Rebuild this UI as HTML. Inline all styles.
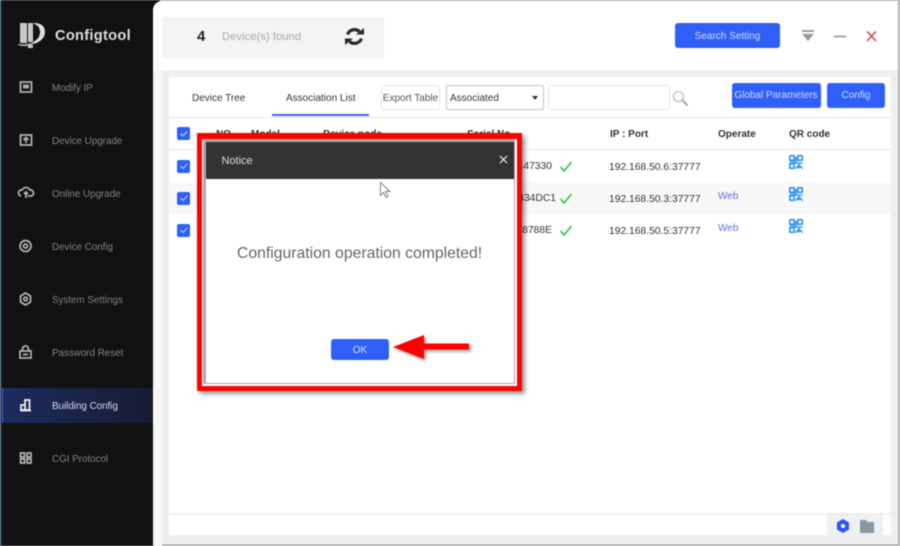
<!DOCTYPE html>
<html><head><meta charset="utf-8">
<style>
html,body{margin:0;padding:0;background:#fff}
#p{position:relative;width:900px;height:546px;overflow:hidden;background:#fff;font-family:"Liberation Sans",sans-serif;filter:blur(.45px)}
#p div,#p span,#p svg{position:absolute}
.t{white-space:nowrap;line-height:14px;font-size:10px}
.s{color:#828282;left:52px;font-size:9.8px}
.h{font-weight:bold;color:#333;top:128px}
.r{color:#333;left:609px;font-size:10.3px}
.b{background:#2f5ff8;color:#cfdcff;text-align:center;border-radius:3px;font-size:10px}
.c{left:177px;width:13px;height:13px;background:#2f5ff8;border-radius:2px}
.web{color:#5a74dc;left:718px}
</style></head><body>
<div id="p">
<div style="left:0;top:0;width:900px;height:1px;background:#a8a8a8"></div>
<div style="left:0;top:0;width:160px;height:546px;background:#111"></div>
<div style="left:0;top:0;width:2px;height:546px;background:#22384f"></div>
<div style="left:153px;top:1px;width:745px;height:545px;background:#fff;border-radius:9px 0 0 0"></div>
<div style="left:153px;top:70px;width:9px;height:476px;background:#f7f7f7"></div>
<div style="left:162px;top:70px;width:736px;height:473px;background:#efefef"></div>
<div style="left:169px;top:77px;width:722px;height:436px;background:#fff"></div>
<div style="left:169px;top:515px;width:722px;height:20px;background:#fff"></div>
<div style="left:827px;top:515px;width:56px;height:20px;background:#eef0f4"></div>
<div style="left:898px;top:0;width:2px;height:546px;background:#b0b0b0"></div>
<div style="left:162px;top:544px;width:738px;height:2px;background:#b0b0b0"></div>

<!-- logo -->
<svg style="left:18px;top:22px" width="28" height="27" viewBox="0 0 28 27"><path d="M2 1h7v20H2zM10 1h5v19h-5z" fill="#c8c8c8"/><path d="M16 1c8 0 11 4 11 9 0 6-5 10-11 12l-1-2c4-2 7-5 7-10 0-4-2-7-6-8z" fill="#ddd"/><path d="M0 22c6 1 11 0 16-2l1 1c-5 3-11 4-17 2z" fill="#bbb"/><path d="M10 23h5v3h-5z" fill="#ccc"/></svg>
<div class="t" style="left:55px;top:27px;font-size:14.6px;line-height:18px;color:#ddd;font-weight:bold;letter-spacing:.3px">Configtool</div>

<!-- sidebar -->
<div style="left:2px;top:388px;width:151px;height:35px;background:linear-gradient(90deg,#1c2c60,#171c32)"></div>
<div style="left:2px;top:388px;width:1px;height:35px;background:#4d55dd"></div>
<div class="t s" style="top:82px">Modify IP</div>
<div class="t s" style="top:135px">Device Upgrade</div>
<div class="t s" style="top:188px">Online Upgrade</div>
<div class="t s" style="top:241px">Device Config</div>
<div class="t s" style="top:294px">System Settings</div>
<div class="t s" style="top:347px">Password Reset</div>
<div class="t" style="left:52px;top:400px;color:#d8dcea;font-size:9.8px">Building Config</div>
<div class="t s" style="top:453px">CGI Protocol</div>
<svg style="left:0;top:0" width="153" height="546" fill="none" stroke="#b4b4b4" stroke-width="1.7">
<rect x="20.500" y="82" width="11" height="10"/><rect x="23" y="84.500" width="6" height="4" fill="#aaa" stroke="none"/>
<rect x="20.500" y="135" width="11" height="10"/><path d="M26 143v-5M23.500 140l2.500-2.500 2.500 2.500"/>
<path d="M21 196a3 3 0 0 1 1-6 4.500 4.500 0 0 1 8 0 3 3 0 0 1 1 6h-3M26 198v-6M24 194l2-2 2 2"/>
<circle cx="25.500" cy="246" r="5.500"/><circle cx="25.500" cy="246" r="2"/>
<path d="M25.500 293l5 3v6l-5 3-5-3v-6z"/><circle cx="25.500" cy="299" r="1.800"/>
<rect x="20" y="351" width="11" height="7"/><path d="M22.500 351v-2a3 3 0 0 1 6 0v2M23 354.500h5"/>
<path d="M21 410v-5h4v5zM25 410v-10h4.500v10zM20 410.500h11" stroke="#f0f0f0"/>
<rect x="20.500" y="453" width="4" height="4"/><rect x="27" y="453" width="4" height="4"/><rect x="20.500" y="459" width="4" height="4"/><rect x="27" y="459" width="4" height="4"/>
</svg>

<!-- top bar -->
<div style="left:162px;top:17px;width:222px;height:41px;background:#f4f4f4"></div>
<div class="t" style="left:197px;top:28px;font-size:15px;line-height:18px;font-weight:bold;color:#222">4</div>
<div class="t" style="left:222px;top:30px;font-size:11.300px;color:#aaa">Device(s) found</div>
<svg style="left:344px;top:26px" width="21" height="21" viewBox="0 0 21 21" fill="none" stroke="#2a2a2a" stroke-width="3.200"><path d="M3.500 8.500a7.500 7.500 0 0 1 12-3"/><path d="M17.500 12.500a7.500 7.500 0 0 1-12 3"/><path d="M12 8.500h8V2z" fill="#2a2a2a" stroke="none"/><path d="M9 12.500H1V19z" fill="#2a2a2a" stroke="none"/></svg>
<div class="b" style="left:675px;top:23px;width:105px;height:25px;line-height:27px">Search Setting</div>
<svg style="left:800px;top:28px" width="80" height="16" fill="none"><path d="M2 2h12v2H2z" fill="#999"/><path d="M2 6h12l-6 7z" fill="#999"/><path d="M34 8.500h12" stroke="#aaa" stroke-width="2"/><path d="M67 3.500l9 9.500M76 3.500l-9 9.500" stroke="#d9484c" stroke-width="1.600"/></svg>

<!-- toolbar -->
<div class="t" style="left:192px;top:92px;color:#333">Device Tree</div>
<div class="t" style="left:286px;top:92px;color:#333">Association List</div>
<div style="left:272px;top:114px;width:97px;height:1.500px;background:#3a66ee"></div>
<div class="t" style="left:381px;top:85px;width:57px;height:23px;border:1px solid #e4e4e4;border-radius:3px;line-height:25px;text-align:center;color:#555">Export Table</div>
<div class="t" style="left:446px;top:85px;width:96px;height:23px;border:1px solid #c4c4c4;border-radius:2px;line-height:25px;text-indent:3px;color:#333">Associated</div>
<div style="left:532px;top:96px;width:0;height:0;border:3.500px solid transparent;border-top:4px solid #333"></div>
<div style="left:548px;top:85px;width:120px;height:23px;border:1px solid #e6e6e6;border-radius:3px"></div>
<svg style="left:672px;top:90px" width="17" height="17" fill="none"><circle cx="6.500" cy="6.500" r="5" stroke="#c0c8ca" stroke-width="1.500"/><path d="M10.500 10.500l5 5" stroke="#aaa" stroke-width="2.200"/></svg>
<div class="b" style="left:732px;top:83px;width:88px;height:25px;padding-right:1px;line-height:26px">Global Parameters</div>
<div class="b" style="left:827px;top:83px;width:58px;height:25px;line-height:26px">Config</div>
<div style="left:169px;top:117px;width:722px;height:1px;background:#e6e6e6"></div>

<!-- table -->
<div style="left:169px;top:149px;width:722px;height:1px;background:#e6e6e6"></div>
<div style="left:169px;top:182px;width:722px;height:32px;background:#f8f8f8"></div>
<div class="t h" style="left:216px">NO.</div>
<div class="t h" style="left:251px">Model</div>
<div class="t h" style="left:323px">Device node</div>
<div class="t h" style="left:467px">Serial No.</div>
<div class="t h" style="left:610px">IP : Port</div>
<div class="t h" style="left:718px">Operate</div>
<div class="t h" style="left:789px">QR code</div>
<div class="c" style="top:127px"></div><div class="c" style="top:159.500px"></div><div class="c" style="top:191.500px"></div><div class="c" style="top:223.500px"></div>
<svg style="left:177px;top:127px" width="13" height="112" fill="none" stroke="#d4e0ff" stroke-width="1"><path d="M3.500 6.500l2.500 2.500 4-4.500M3.500 39l2.500 2.500 4-4.500M3.500 71l2.500 2.500 4-4.500M3.500 103l2.500 2.500 4-4.500"/></svg>
<div class="t" style="left:495px;width:57px;text-align:right;top:160px;color:#333;font-size:10.300px">88447330</div>
<div class="t" style="left:495px;width:61px;text-align:right;top:192px;color:#333;font-size:10.300px">884434DC1</div>
<div class="t" style="left:495px;width:57px;text-align:right;top:224px;color:#333;font-size:10.300px">8848788E</div>
<svg style="left:558px;top:160px" width="16" height="80" fill="none" stroke="#3ecb5e" stroke-width="1.800"><path d="M2.500 7l3.500 4 7.500-9M2.500 39l3.500 4 7.500-9M2.500 71l3.500 4 7.500-9"/></svg>
<div class="t r" style="top:161px">192.168.50.6:37777</div>
<div class="t r" style="top:193px">192.168.50.3:37777</div>
<div class="t r" style="top:225px">192.168.50.5:37777</div>
<div class="t web" style="top:190px">Web</div>
<div class="t web" style="top:222px">Web</div>
<svg style="left:789px;top:155px" width="14" height="78" fill="none" stroke="#2f93ea" stroke-width="1.600">
<g><rect x=".8" y=".8" width="4.400" height="4.400"/><rect x="8.800" y=".8" width="4.400" height="4.400"/><rect x=".8" y="8.800" width="4.400" height="4.400"/><path d="M7 2v6h6.500M7 13.500l3-3.500 3.500 3.500M1 7h6M10 13.500v-3"/></g>
<g transform="translate(0,32)"><rect x=".8" y=".8" width="4.400" height="4.400"/><rect x="8.800" y=".8" width="4.400" height="4.400"/><rect x=".8" y="8.800" width="4.400" height="4.400"/><path d="M7 2v6h6.500M7 13.500l3-3.500 3.500 3.500M1 7h6M10 13.500v-3"/></g>
<g transform="translate(0,64)"><rect x=".8" y=".8" width="4.400" height="4.400"/><rect x="8.800" y=".8" width="4.400" height="4.400"/><rect x=".8" y="8.800" width="4.400" height="4.400"/><path d="M7 2v6h6.500M7 13.500l3-3.500 3.500 3.500M1 7h6M10 13.500v-3"/></g>
</svg>

<!-- footer icons -->
<svg style="left:835px;top:517px" width="42" height="18"><path d="M8 2l6 3.500v7L8 16l-6-3.500v-7z" fill="#2c56f0"/><circle cx="8" cy="9" r="2" fill="#fff"/><path d="M25 3h6l1.500 2H39v11H25z" fill="#8e979e"/></svg>

<!-- dialog with annotation -->
<div style="left:197px;top:133px;width:325px;height:258px;background:#f00;box-shadow:3px 3px 4px rgba(0,0,0,.4)"></div>
<div style="left:202px;top:139px;width:315px;height:247px;background:#fff"></div>
<div style="left:203px;top:139px;width:312px;height:245px;background:#a8a8a8"></div>
<div style="left:206px;top:142px;width:308px;height:241px;background:#fff"></div>
<div style="left:206px;top:142px;width:308px;height:37px;background:#333"></div>
<div class="t" style="left:221.500px;top:154px;font-size:11px;color:#dcdcdc">Notice</div>
<svg style="left:499px;top:155px" width="9" height="9" stroke="#f2f2f2" stroke-width="1.200"><path d="M1 1l7 7M8 1l-7 7"/></svg>
<div class="t" style="left:237px;top:245px;font-size:15.750px;line-height:18px;color:#666">Configuration operation completed!</div>
<div class="b" style="left:331px;top:339px;width:58px;height:21px;line-height:23px;color:#d4e0ff">OK</div>
<svg style="left:379px;top:181px" width="13" height="19" fill="#fff" stroke="#777" stroke-width=".9"><path d="M1.500 1.500v13l3-3 2.500 5 2-1-2.500-5h4.500z"/></svg>
<svg style="left:388px;top:332px;overflow:visible" width="90" height="30"><path d="M5 15L36 3v8.500h45v6H36V27z" fill="#f00" style="filter:drop-shadow(2px 2px 1.500px rgba(0,0,0,.4))"/></svg>
</div>
</body></html>
